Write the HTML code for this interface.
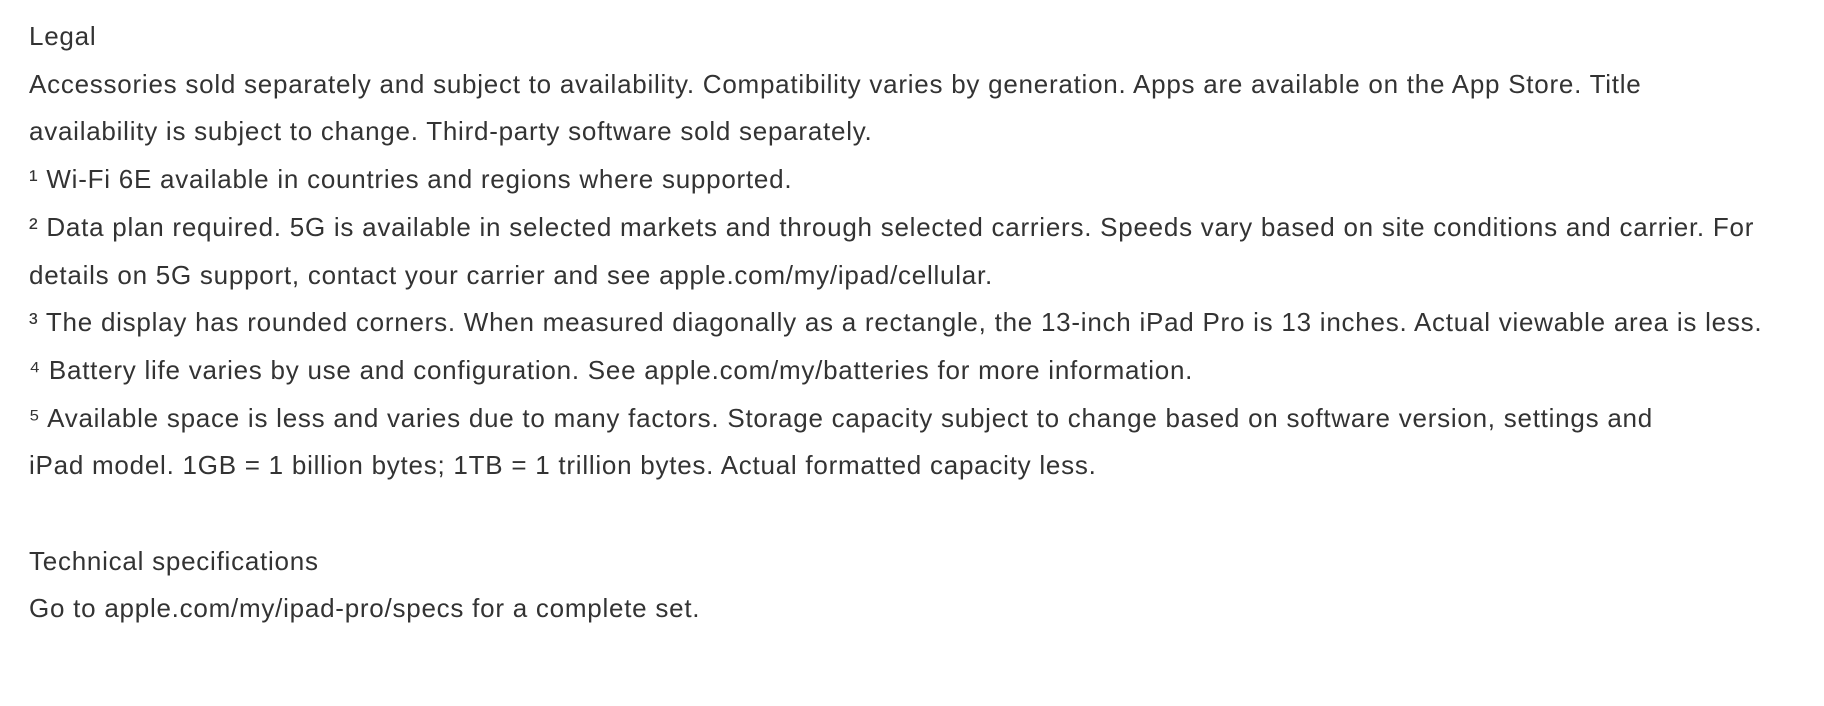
<!DOCTYPE html>
<html><head><meta charset="utf-8"><style>
html,body{margin:0;padding:0;background:#fff;width:1824px;height:706px;overflow:hidden}
.w{position:absolute;left:29px;top:13px;font-family:"Liberation Sans",Arial,sans-serif;font-size:26px;letter-spacing:0.75px;line-height:47.7px;color:#333}
.l{white-space:nowrap}
</style></head><body><div class="w">
<div class="l">Legal</div>
<div class="l">Accessories sold separately and subject to availability. Compatibility varies by generation. Apps are available on the App Store. Title</div>
<div class="l">availability is subject to change. Third-party software sold separately.</div>
<div class="l">¹ Wi-Fi 6E available in countries and regions where supported.</div>
<div class="l">² Data plan required. 5G is available in selected markets and through selected carriers. Speeds vary based on site conditions and carrier. For</div>
<div class="l">details on 5G support, contact your carrier and see apple.com/my/ipad/cellular.</div>
<div class="l">³ The display has rounded corners. When measured diagonally as a rectangle, the 13-inch iPad Pro is 13 inches. Actual viewable area is less.</div>
<div class="l">⁴ Battery life varies by use and configuration. See apple.com/my/batteries for more information.</div>
<div class="l">⁵ Available space is less and varies due to many factors. Storage capacity subject to change based on software version, settings and</div>
<div class="l">iPad model. 1GB = 1 billion bytes; 1TB = 1 trillion bytes. Actual formatted capacity less.</div>
<div class="l">&nbsp;</div>
<div class="l">Technical specifications</div>
<div class="l">Go to apple.com/my/ipad-pro/specs for a complete set.</div>
</div></body></html>
